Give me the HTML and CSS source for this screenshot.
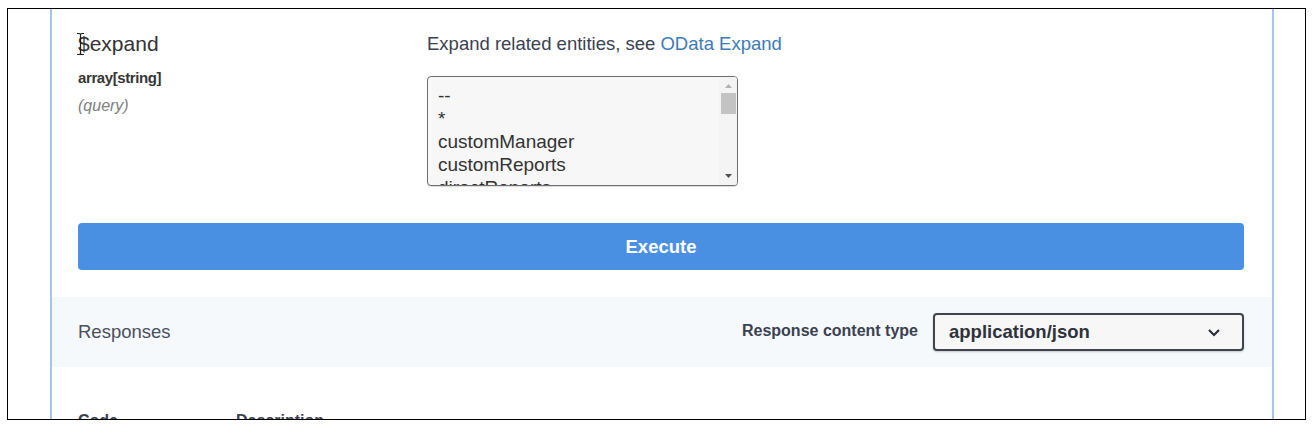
FILE: index.html
```html
<!DOCTYPE html>
<html lang="en">
<head>
<meta charset="utf-8">
<title>$expand parameter</title>
<link rel="stylesheet" href="styles.css">
</head>
<body>
<div class="frame">
  <div class="opblock">
    <div class="params">
      <div class="param-name-col">
        <div class="param-name">$expand
          <svg class="ibeam" width="9" height="24" viewBox="0 0 9 24" aria-hidden="true">
            <path d="M1 1.5h2.2c.8 0 1.3.5 1.3 1.3c0-.8.5-1.3 1.3-1.3H8M4.5 2.8v18.4M1 22.5h2.2c.8 0 1.3-.5 1.3-1.3c0 .8.5 1.3 1.3 1.3H8" fill="none" stroke="#1d1d1d" stroke-width="1.2"/>
          </svg>
        </div>
        <div class="param-type">array[string]</div>
        <div class="param-in">(query)</div>
      </div>
      <div class="param-desc-col">
        <div class="param-desc">Expand related entities, see <a class="link" href="#">OData Expand</a></div>
        <div class="listbox">
          <div class="list-items">
            <div class="item">--</div>
            <div class="item">*</div>
            <div class="item">customManager</div>
            <div class="item">customReports</div>
            <div class="item">directReports</div>
          </div>
          <div class="scrollbar">
            <svg class="arrow" width="9" height="6" viewBox="0 0 9 6"><path d="M1 5h7L4.5 1z" fill="#b3b3b3"/></svg>
            <div class="thumb"></div>
            <div class="track-fill"></div>
            <svg class="arrow" width="9" height="6" viewBox="0 0 9 6"><path d="M1 1h7L4.5 5z" fill="#505050"/></svg>
          </div>
        </div>
      </div>
    </div>
    <div class="exec-wrap">
      <button class="execute">Execute</button>
    </div>
    <div class="responses-bar">
      <div class="responses-title">Responses</div>
      <div class="ctype">
        <span class="ctype-label">Response content type</span>
        <div class="ctype-select">
          <span>application/json</span>
          <svg width="14" height="9" viewBox="0 0 14 9" aria-hidden="true"><path d="M2 2l5 5 5-5" fill="none" stroke="#2b2e36" stroke-width="2.2"/></svg>
        </div>
      </div>
    </div>
    <div class="table-head">
      <div class="col-code">Code</div>
      <div class="col-desc">Description</div>
    </div>
  </div>
</div>
</body>
</html>
```

FILE: styles.css
```css
html, body {
  margin: 0;
  padding: 0;
  background: #ffffff;
}
body {
  font-family: "Liberation Sans", Arial, sans-serif;
  color: #3b4151;
}
.frame {
  margin: 8px 0 0 7px;
  width: 1299px;
  height: 412px;
  box-sizing: border-box;
  border: 1px solid #000;
  overflow: hidden;
}
.opblock {
  margin-left: 42px;
  width: 1224px;
  height: 100%;
  box-sizing: border-box;
  border-left: 2px solid #a4c6ec;
  border-right: 2px solid #a4c6ec;
}
.params {
  display: grid;
  grid-template-columns: 349px 1fr;
  padding: 23px 28px 0 26px;
}
.param-name {
  position: relative;
  font-size: 21px;
  line-height: 24px;
  color: #333;
}
.ibeam {
  position: absolute;
  left: -2px;
  top: 0;
}
.param-type {
  margin-top: 12px;
  font-size: 15px;
  line-height: 19px;
  font-weight: 700;
  letter-spacing: -0.4px;
  color: #363636;
}
.param-in {
  margin-top: 9px;
  font-size: 16px;
  line-height: 19px;
  font-style: italic;
  color: #808080;
}
.param-desc {
  font-size: 18.5px;
  line-height: 24px;
  color: #3b4151;
}
.link {
  color: #3d7ab8;
  text-decoration: none;
}
.listbox {
  margin-top: 20px;
  width: 311px;
  height: 110px;
  box-sizing: border-box;
  border: 1px solid #6f6f6f;
  border-radius: 4px;
  background: #f7f7f7;
  display: flex;
  overflow: hidden;
  box-shadow: 0 1px 1px rgba(0,0,0,0.15);
}
.list-items {
  flex: 1;
  padding: 7px 0 0 10px;
  overflow: hidden;
}
.item {
  font-size: 19px;
  line-height: 23px;
  color: #333;
  white-space: nowrap;
}
.scrollbar {
  width: 18px;
  display: flex;
  flex-direction: column;
  align-items: center;
  padding: 6px 0 6px;
  background: #f4f4f4;
}
.arrow {
  flex: none;
}
.thumb {
  margin-top: 4px;
  width: 15px;
  height: 21px;
  background: #c3c3c3;
}
.track-fill {
  flex: 1;
}
.exec-wrap {
  padding: 37px 28px 0 26px;
}
.execute {
  display: block;
  width: 100%;
  height: 47px;
  border: none;
  border-radius: 4px;
  background: #4a90e2;
  color: #fff;
  font-family: "Liberation Sans", Arial, sans-serif;
  font-size: 18.5px;
  font-weight: 700;
  padding: 0;
}
.responses-bar {
  margin-top: 27px;
  height: 70px;
  background: #f6f9fc;
  display: flex;
  align-items: center;
  justify-content: space-between;
  padding: 0 28px 0 26px;
}
.responses-title {
  font-size: 18.5px;
  color: #4a4f5c;
}
.ctype {
  display: flex;
  align-items: center;
  gap: 15px;
}
.ctype-label {
  font-size: 16px;
  font-weight: 700;
  color: #3b4151;
  position: relative;
  top: -1px;
}
.ctype-select {
  width: 311px;
  height: 38px;
  box-sizing: border-box;
  border: 2px solid #41444e;
  border-radius: 4px;
  background: #f7f7f7;
  display: flex;
  align-items: center;
  justify-content: space-between;
  padding: 0 21px 0 14px;
  font-size: 18.5px;
  font-weight: 700;
  color: #2f323a;
  box-shadow: 0 1px 2px rgba(0,0,0,0.2);
}
.table-head {
  margin-top: 44px;
  display: flex;
  padding-left: 26px;
  font-size: 16px;
  line-height: 20px;
  font-weight: 700;
  color: #3b4151;
}
.col-code {
  width: 158px;
}
```
